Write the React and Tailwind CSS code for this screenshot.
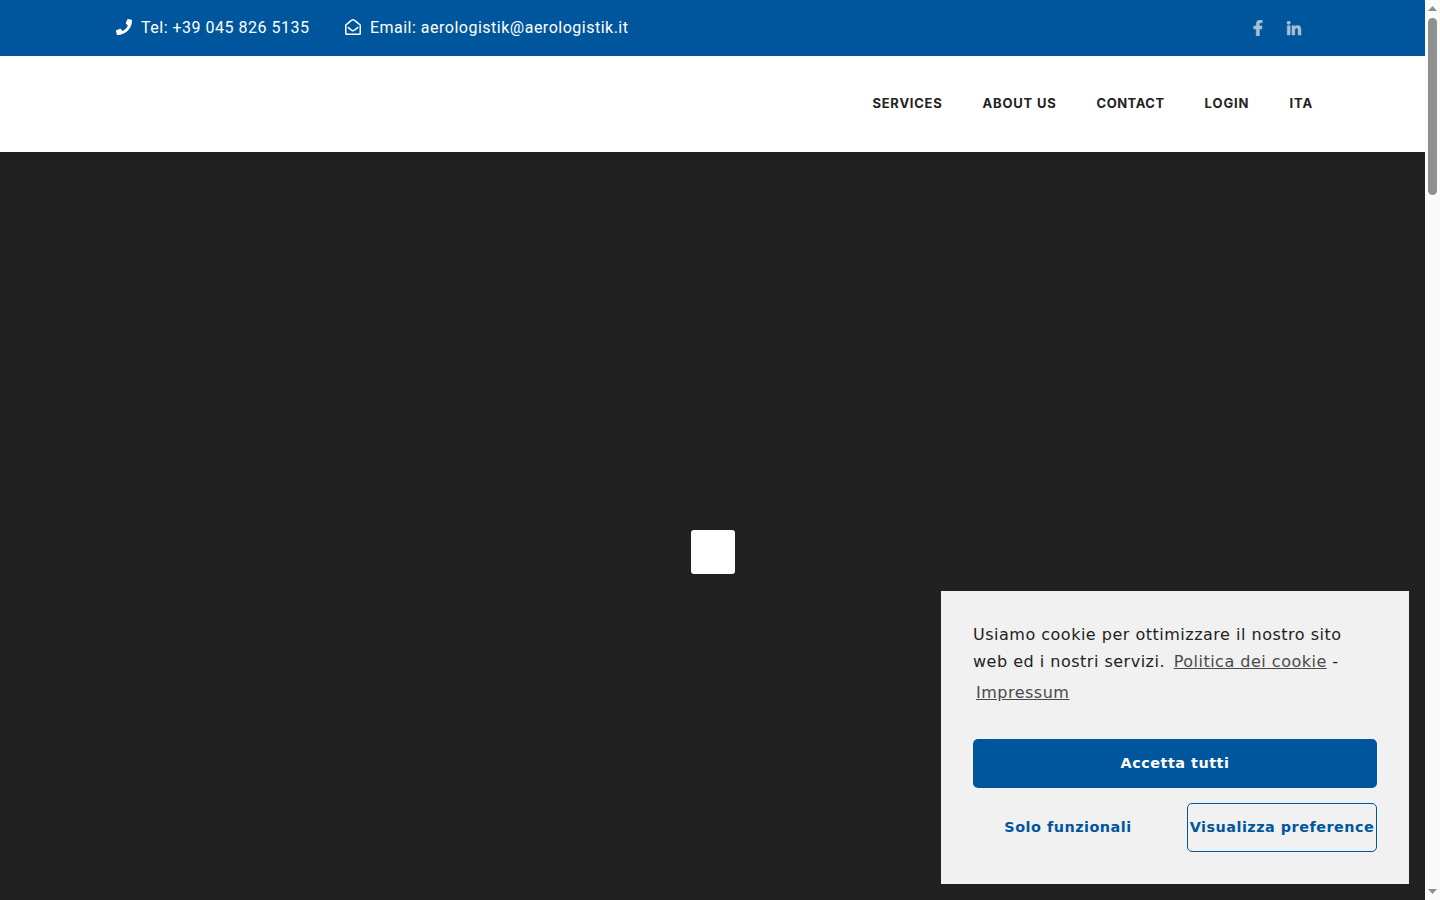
import { FaPhone, FaRegEnvelopeOpen, FaFacebookF, FaLinkedinIn } from "react-icons/fa";

function TopBar() {
  return (
    <div className="h-14 bg-[#00569d] flex items-center justify-between pl-[116px] pr-[123px] font-['Roboto',sans-serif] text-white text-base tracking-[0.5px]">
      <div className="flex items-center">
        <FaPhone className="w-4 h-4 mr-[9px] -mt-0.5" />
        <span>Tel: +39 045 826 5135</span>
        <FaRegEnvelopeOpen className="w-4 h-4 ml-9 mr-[8.5px] -mt-0.5" />
        <span>Email: aerologistik@aerologistik.it</span>
      </div>
      <div className="flex items-center gap-5 text-[#a9bfd4]">
        <FaFacebookF className="w-4 h-4 stroke-current stroke-[16]" />
        <FaLinkedinIn className="w-4 h-4 mt-0.5 stroke-current stroke-[16]" />
      </div>
    </div>
  );
}

function Navbar() {
  return (
    <nav className="h-24 bg-white flex items-center justify-end gap-10 pr-[112px] font-['Inter',sans-serif] font-bold text-[13px] tracking-[0.9px] text-[#222222]">
      <a href="#" className="tracking-[0.75px]">SERVICES</a>
      <a href="#" className="tracking-[0.8px]">ABOUT US</a>
      <a href="#" className="tracking-[0.5px]">CONTACT</a>
      <a href="#">LOGIN</a>
      <a href="#">ITA</a>
    </nav>
  );
}

function CookieBox() {
  return (
    <div className="absolute right-[31px] bottom-4 w-[468px] h-[293px] bg-[#f1f1f1] p-8 font-['DejaVu_Sans',sans-serif] text-base tracking-[0.5px] text-[#222222]">
      <p className="leading-[27px] -mt-[2px]">
        Usiamo cookie per ottimizzare il nostro sito web ed i nostri servizi.{" "}
        <a href="#" className="underline text-[#4a4a4a] ml-[3px]">Politica dei cookie</a> -{" "}
        <a href="#" className="underline text-[#4a4a4a] ml-[3px] leading-[35px]">Impressum</a>
      </p>
      <button className="mt-[29px] w-full h-[49px] rounded-[5px] bg-[#00569d] text-white text-[14.4px] font-bold">
        Accetta tutti
      </button>
      <div className="mt-[15px] flex gap-6">
        <button className="w-[190px] h-[49px] text-[#00569d] text-[14.4px] font-bold">Solo funzionali</button>
        <button className="w-[190px] h-[49px] rounded-[5px] border border-[#00569d] text-[#00569d] text-[14.4px] font-bold whitespace-nowrap">
          Visualizza preference
        </button>
      </div>
    </div>
  );
}

function Scrollbar() {
  return (
    <div className="w-[15px] h-full bg-[#fafafa] flex flex-col items-center relative">
      <svg className="mt-[6px] w-[9px] h-[5px] text-[#8f8f8f]" viewBox="0 0 9 5"><path d="M4.5 0L9 5H0z" fill="currentColor" /></svg>
      <div className="mt-[7px] w-[9px] h-[177px] rounded-full bg-[#8f8f8f]"></div>
      <svg className="mt-auto mb-[6px] w-[9px] h-[5px] text-[#8f8f8f]" viewBox="0 0 9 5"><path d="M0 0H9L4.5 5z" fill="currentColor" /></svg>
    </div>
  );
}

export default function App() {
  return (
    <div className="h-screen w-full flex overflow-hidden relative">
      <div className="flex-1 flex flex-col min-w-0">
        <TopBar />
        <Navbar />
        {/* preloader */}
        <div className="flex-1 bg-[#212121] flex justify-center pt-[378px]">
          <div className="w-11 h-11 bg-white rounded-[3px]"></div>
        </div>
      </div>
      <Scrollbar />
      <CookieBox />
    </div>
  );
}
